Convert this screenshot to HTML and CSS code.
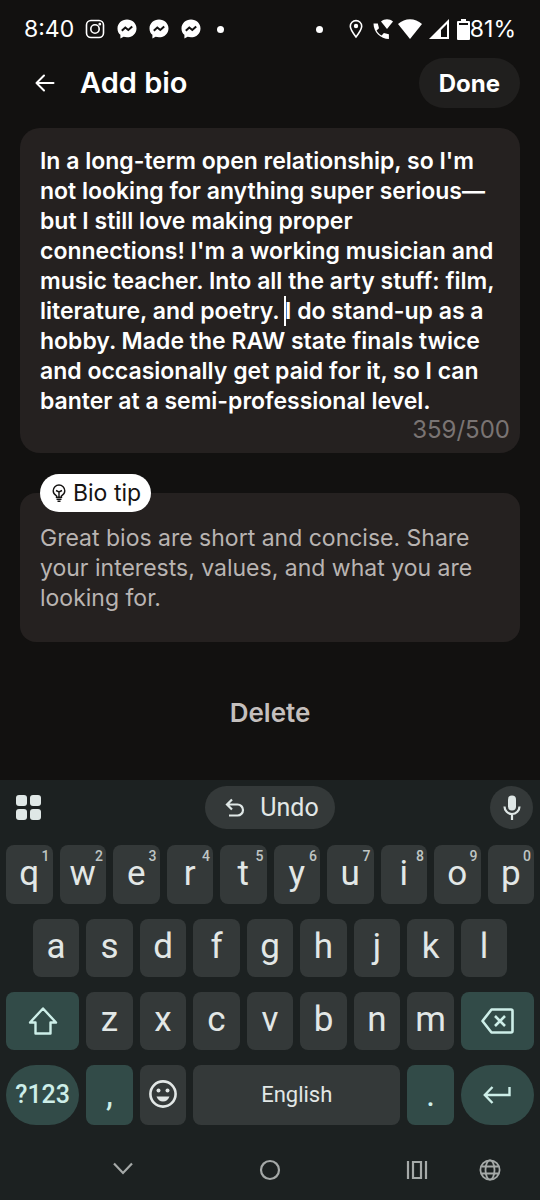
FILE: index.html
```html
<!DOCTYPE html>
<html lang="en">
<head>
<meta charset="utf-8">
<meta name="viewport" content="width=device-width, initial-scale=1">
<title>Add bio</title>
<link rel="stylesheet" href="styles.css">
</head>
<body>
<svg class="defs" aria-hidden="true">
  <symbol id="messenger" viewBox="0 0 20 20">
    <path fill="#fff" d="M10 .5C4.600.5.5 4.400.5 9.400c0 2.700 1.100 4.900 2.900 6.400v3.700l3.200-1.700c1 .3 2.200.5 3.400.5 5.400 0 9.500-3.900 9.500-8.900S15.400.5 10 .5z"/>
    <path fill="none" stroke="#121110" stroke-width="2" d="M4.800 11.800 8.300 8.500l3 2.500L15.200 7.500"/>
  </symbol>
</svg>
<div class="screen">
  <div class="status">
    <div class="status-left">
      <span class="status-text">8:40</span>
      <svg class="ico20" viewBox="0 0 20 20" fill="none" stroke="#fff" stroke-width="1.600"><rect x="1.500" y="1.500" width="17" height="17" rx="4.500"/><circle cx="10" cy="10" r="4.200"/><circle cx="14.800" cy="5.200" r=".6" fill="#fff"/></svg>
      <svg class="ico20"><use href="#messenger"/></svg>
      <svg class="ico20"><use href="#messenger"/></svg>
      <svg class="ico20"><use href="#messenger"/></svg>
      <span class="dot"></span>
    </div>
    <div class="status-right">
      <span class="dot"></span>
      <svg class="pin" viewBox="0 0 14 20"><path fill="none" stroke="#fff" stroke-width="1.600" d="M7 18C3.500 13.500 1.300 10.200 1.300 7.300a5.700 5.700 0 0 1 11.400 0c0 2.900-2.200 6.200-5.700 10.700z"/><circle cx="7" cy="7" r="2.200" fill="#fff"/></svg>
      <svg class="ico20" viewBox="0 0 20 20" fill="#fff"><path d="M8 2.500c3.500-3 8.500-3 12 0l-6 7.500z"/><path d="M.5 4.500h4.300l1.200 4.800-2.400 2.200c1.200 2.300 2.600 3.700 5 4.900l2.300-2.300 5 1.200V20C7.500 20 .5 13 .5 4.500z"/></svg>
      <svg class="wifi" viewBox="0 0 26 22" fill="#fff"><path d="M1 6C8-.5 18-.5 25 6L13 21z"/></svg>
      <svg class="signal" viewBox="0 0 20 20"><path fill="#fff" fill-rule="evenodd" d="M20 0v20H0zM18 5v13h-6V11z"/></svg>
      <svg class="battery" viewBox="0 0 13 21" fill="#fff"><path fill-rule="evenodd" d="M4 0h5v2h3q1 0 1 1v17q0 1-1 1H1q-1 0-1-1V3q0-1 1-1h3zM2 4v2h9v-2z"/></svg>
      <span class="status-text">81%</span>
    </div>
  </div>

  <header class="header">
    <button class="back" aria-label="Back"><svg viewBox="0 0 20 18" fill="none" stroke="#fff" stroke-width="2" stroke-linecap="round" stroke-linejoin="round"><path d="M9 1.500 1.500 9 9 16.500M1.500 9h17"/></svg></button>
    <h1 class="title">Add bio</h1>
    <button class="done">Done</button>
  </header>

  <main class="content">
    <div class="bio">
      <textarea class="bio-text" rows="9" maxlength="500" aria-label="Bio" spellcheck="false">In a long-term open relationship, so I'm not looking for anything super serious—but I still love making proper connections! I'm a working musician and music teacher. Into all the arty stuff: film, literature, and poetry. I do stand-up as a hobby. Made the RAW state finals twice and occasionally get paid for it, so I can banter at a semi-professional level.</textarea>
      <span class="caret"></span>
      <div class="count">359/500</div>
    </div>

    <section class="tip">
      <h2 class="tip-label">
        <svg viewBox="0 0 14 18" fill="none" stroke="#151312" stroke-width="1.400"><path d="M4.500 11.800C2.500 10.800 1.200 9 1.200 6.800a5.800 5.800 0 0 1 11.600 0c0 2.200-1.300 4-3.300 5v1.500h-5zM7 13V8M4 6.500 7 8l3-1.500M4.500 15.200h5M5.500 17.200h3"/></svg>
        Bio tip
      </h2>
      <p class="tip-text">Great bios are short and concise. Share your interests, values, and what you are looking for.</p>
    </section>

    <button class="delete">Delete</button>
  </main>

  <div class="keyboard">
    <div class="tools">
      <button class="tool" aria-label="More tools"><svg class="apps" viewBox="0 0 25 25" fill="#dfe7e6"><rect width="11" height="11" rx="3"/><rect x="14" width="11" height="11" rx="3"/><rect y="14" width="11" height="11" rx="3"/><rect x="14" y="14" width="11" height="11" rx="3"/></svg></button>
      <button class="undo"><svg viewBox="0 0 20 20" fill="none" stroke="#dfe7e6" stroke-width="2.200"><path d="M7 1.500 2 6.500l5 5M2 6.500h10.500a5.500 5.500 0 0 1 0 11H4"/></svg>Undo</button>
      <button class="tool mic" aria-label="Voice input"><svg viewBox="0 0 18 25"><rect x="5" y=".5" width="8" height="15" rx="4" fill="#dfe7e6"/><path fill="none" stroke="#dfe7e6" stroke-width="2.200" d="M1.500 11.500a7.500 7.500 0 0 0 15 0M9 19v6"/></svg></button>
    </div>
    <div class="keys">
      <button class="key">q<sup>1</sup></button><button class="key">w<sup>2</sup></button><button class="key">e<sup>3</sup></button><button class="key">r<sup>4</sup></button><button class="key">t<sup>5</sup></button><button class="key">y<sup>6</sup></button><button class="key">u<sup>7</sup></button><button class="key">i<sup>8</sup></button><button class="key">o<sup>9</sup></button><button class="key">p<sup>0</sup></button>
      <button class="key row-start">a</button><button class="key">s</button><button class="key">d</button><button class="key">f</button><button class="key">g</button><button class="key">h</button><button class="key">j</button><button class="key">k</button><button class="key">l</button>
      <button class="key accent wide" aria-label="Shift"><svg class="shift" viewBox="0 0 30 28" fill="none" stroke="#cdeee8" stroke-width="2.400" stroke-linejoin="round"><path d="M15 1.500 28 15.500h-5.500V26.500h-15V15.500H2z"/></svg></button><button class="key">z</button><button class="key">x</button><button class="key">c</button><button class="key">v</button><button class="key">b</button><button class="key">n</button><button class="key">m</button><button class="key accent wide" aria-label="Backspace"><svg class="erase" viewBox="0 0 33 26" fill="none" stroke="#cdeee8" stroke-width="2.600" stroke-linejoin="round"><path d="M10.500 1.500H30q1.500 0 1.500 1.500v20q0 1.500-1.500 1.500H10.500L1.500 13zM14 8l10 10M24 8l-10 10"/></svg></button>
      <button class="key accent wide pill symbols">?123</button><button class="key accent">,</button><button class="key" aria-label="Emoji"><svg class="emoji" viewBox="0 0 28 28"><circle cx="14" cy="14" r="12.600" fill="none" stroke="#e2e7e6" stroke-width="2.600"/><circle cx="9.500" cy="10.500" r="2" fill="#e2e7e6"/><circle cx="18.500" cy="10.500" r="2" fill="#e2e7e6"/><path fill="#e2e7e6" d="M7.500 16.500h13c-1 3-3.500 5-6.500 5s-5.500-2-6.500-5z"/></svg></button><button class="key space">English</button><button class="key accent">.</button><button class="key accent wide pill" aria-label="Enter"><svg class="enter" viewBox="0 0 28 18" fill="none" stroke="#cdeee8" stroke-width="2.400"><path d="M9.500 1 1.800 9l7.700 8M2 9h24.500V1"/></svg></button>
    </div>
    <nav class="nav">
      <button class="nav-btn" aria-label="Hide keyboard"><svg viewBox="0 0 22 22" fill="none" stroke="#a5a9a8" stroke-width="2.200"><path d="M2 4.500l9 9.500 9-9.500"/></svg></button>
      <button class="nav-btn" aria-label="Home"><svg viewBox="0 0 22 22" fill="none" stroke="#a5a9a8" stroke-width="2.200"><circle cx="11" cy="11" r="9"/></svg></button>
      <button class="nav-btn recents" aria-label="Recent apps"><svg viewBox="0 0 22 22" fill="none" stroke="#a5a9a8" stroke-width="2.200"><path d="M2 2v18M20 2v18M7 3h8v16H7z"/></svg></button>
      <button class="nav-btn" aria-label="Change language"><svg viewBox="0 0 22 22" fill="none" stroke="#a5a9a8" stroke-width="1.800"><circle cx="11" cy="11" r="9.600"/><ellipse cx="11" cy="11" rx="4.500" ry="9.600"/><path d="M2.200 7.500h17.600M2.200 14.500h17.600"/></svg></button>
    </nav>
  </div>
</div>
</body>
</html>
```
FILE: styles.css
```css
* { box-sizing: border-box; }
body {
  margin: 0;
  background: #121110;
  color: #fff;
  font-family: Inter, "Liberation Sans", sans-serif;
}
button {
  padding: 0;
  border: 0;
  background: none;
  color: inherit;
  font: inherit;
}
svg { display: block; flex: none; }
.defs { position: absolute; width: 0; height: 0; }
.screen { min-height: 100vh; display: flex; flex-direction: column; }

.status {
  height: 58px;
  padding: 0 24px;
  display: flex;
  justify-content: space-between;
  align-items: center;
}
.status-left, .status-right { display: flex; align-items: center; }
.status-left { gap: 12px; }
.status-text { font-size: 23px; line-height: 30px; }
.status-left .status-text { margin-right: -1px; }
.status-left .dot { margin-left: 4px; }
.status-right { gap: 8px; }
.status-right .dot { margin-right: 18px; }
.status-right .status-text { margin-left: -8px; }
.ico20 { width: 20px; height: 20px; }
.dot { width: 7px; height: 7px; border-radius: 50%; background: #fff; }
.pin { width: 14px; height: 20px; margin-right: 2px; }
.wifi { width: 26px; height: 22px; margin-left: -4px; }
.signal { width: 20px; height: 20px; margin-left: -2px; }
.battery { width: 13px; height: 21px; }

.header { height: 50px; padding: 0 20px 0 35px; display: flex; align-items: center; }
.back svg { width: 20px; height: 18px; }
.title { margin: 0 0 0 25px; flex: 1; font-size: 29px; line-height: 34px; font-weight: 600; }
.done {
  height: 50px;
  padding: 0 20px;
  border-radius: 25px;
  background: #201f1e;
  font-size: 24px;
  font-weight: 700;
}

.content { padding: 20px 20px 0; display: flex; flex-direction: column; }
.bio {
  position: relative;
  padding: 18px 10px 9px 20px;
  border-radius: 20px;
  background: #252120;
}
.bio-text {
  display: block;
  width: 100%;
  height: 270px;
  padding: 0 10px 0 0;
  border: 0;
  outline: 0;
  resize: none;
  overflow: hidden;
  background: none;
  color: #fff;
  font: 600 23px/30px Inter, sans-serif;
}
.caret {
  position: absolute;
  left: 264px;
  top: 168px;
  width: 2px;
  height: 30px;
  background: #fff;
}
.count { color: #7a7473; font-size: 24px; line-height: 28px; text-align: right; }

.tip {
  margin-top: 40px;
  padding: 0 20px 29px;
  border-radius: 16px;
  background: #252120;
}
.tip-label {
  width: max-content;
  height: 38px;
  margin: -19px 0 11px;
  padding: 0 10px 0 12px;
  display: flex;
  align-items: center;
  gap: 7px;
  border-radius: 19px;
  background: #fff;
  color: #151312;
  font-size: 23px;
  font-weight: 400;
}
.tip-label svg { width: 14px; height: 18px; }
.tip-text { margin: 0; color: #b9b4b2; font-size: 23px; line-height: 30px; }
.delete {
  align-self: center;
  margin-top: 54px;
  padding: 0 20px;
  color: #c4bfbd;
  font-size: 26px;
  line-height: 34px;
  font-weight: 600;
}

.keyboard {
  margin-top: auto;
  padding: 6px 6px 0;
  background: #1c2121;
  color: #e2e7e6;
  font-family: Roboto, sans-serif;
}
.tools {
  height: 43px;
  padding: 0 1px;
  display: grid;
  grid-template-columns: 1fr auto 1fr;
  align-items: center;
}
.tool { width: 43px; height: 43px; display: grid; place-items: center; }
.apps { width: 25px; height: 25px; }
.mic { justify-self: end; border-radius: 50%; background: #343939; }
.mic svg { width: 18px; height: 25px; }
.undo {
  height: 43px;
  padding: 0 16px 0 20px;
  display: flex;
  align-items: center;
  gap: 15px;
  border-radius: 22px;
  background: #343939;
  font-size: 25px;
}
.undo svg { width: 20px; height: 20px; }
.keys {
  margin-top: 16px;
  display: grid;
  grid-template-columns: repeat(20, minmax(0, 1fr));
  grid-template-rows: 59px 58px 58px 60px;
  gap: 15px 7px;
}
.key {
  position: relative;
  grid-column: span 2;
  padding-bottom: 2px;
  display: flex;
  align-items: center;
  justify-content: center;
  border-radius: 8px;
  background: #343939;
  font-size: 35px;
  line-height: 40px;
}
.row-start { grid-column: 2 / span 2; }
.wide { grid-column: span 3; padding-bottom: 0; }
.space { grid-column: span 8; padding-bottom: 0; font-size: 22px; }
.accent { padding-bottom: 0; background: #324b48; color: #cdeee8; }
.pill { border-radius: 30px; }
.symbols { font-size: 25px; font-weight: 500; }
.key sup { position: absolute; top: 3px; right: 3px; color: #bfc5c4; font-size: 14px; line-height: 16px; font-weight: 500; }
.shift { width: 30px; height: 28px; }
.erase { width: 33px; height: 26px; }
.emoji { width: 28px; height: 28px; }
.enter { width: 28px; height: 18px; }
.nav {
  height: 75px;
  padding-top: 14px;
  display: grid;
  grid-template-columns: 234fr 60fr 80fr 74fr 72fr 8fr;
  align-items: center;
  justify-items: center;
}
.recents { grid-column: 4; }
.nav-btn svg { width: 22px; height: 22px; }
```
